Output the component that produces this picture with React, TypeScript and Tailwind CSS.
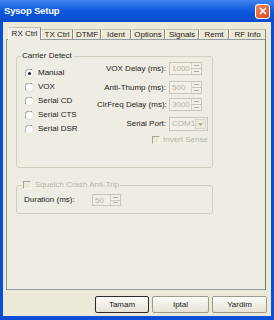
import React from 'react';

const tabs = [
  { label: 'RX Ctrl', w: 'w-[33px]' },
  { label: 'TX Ctrl', w: 'w-[32px]' },
  { label: 'DTMF', w: 'w-[28px]' },
  { label: 'Ident', w: 'w-[30px]' },
  { label: 'Options', w: 'w-[34px]' },
  { label: 'Signals', w: 'w-[34px]' },
  { label: 'Remt', w: 'w-[30px]' },
  { label: 'RF Info', w: 'w-[37px]' },
];

const radios = ['Manual', 'VOX', 'Serial CD', 'Serial CTS', 'Serial DSR'];

function Radio({ checked }: { checked?: boolean }) {
  return (
    <svg width="9" height="9" viewBox="0 0 9 9" className="shrink-0">
      <circle cx="4.5" cy="4.5" r="4" fill="#ffffff" />
      <path d="M1.2 7.3 A4 4 0 0 1 7.3 1.2" fill="none" stroke="#8a877c" strokeWidth="1" />
      <path d="M7.3 1.2 A4 4 0 0 1 1.2 7.3" fill="none" stroke="#dcdad0" strokeWidth="1" />
      {checked && <circle cx="4.5" cy="4.5" r="1.6" fill="#222" />}
    </svg>
  );
}

function Checkbox() {
  return (
    <div className="w-[8px] h-[8px] shrink-0 border-t border-l border-[#a8a59a] border-b border-r border-b-[#f4f3ee] border-r-[#f4f3ee] bg-[#ece9d8]" />
  );
}

function Spin({ value, w = 'w-[33px]', h = 'h-[13px]' }: { value: string; w?: string; h?: string }) {
  return (
    <div className={`${w} ${h} flex border border-[#c9c7ba] bg-[#f1efe6]`}>
      <div className="flex-1 pl-[2px] leading-[11px] text-[#b8b5a6]">{value}</div>
      <div className="w-[10px] flex flex-col border-l border-[#d6d3c6]">
        <div className="flex-1 flex items-center justify-center border-b border-[#c9c7ba]">
          <div className="w-[5px] h-px bg-[#b0ad9f]" />
        </div>
        <div className="flex-1 flex items-center justify-center">
          <div className="w-[5px] h-px bg-[#b0ad9f]" />
        </div>
      </div>
    </div>
  );
}

function Combo() {
  return (
    <div className="w-[39px] h-[14px] flex border border-[#c9c7ba] bg-[#f1efe6]">
      <div className="flex-1 pl-[2px] leading-[12px] text-[#b8b5a6]">COM1</div>
      <div className="w-[11px] my-px mr-px flex items-center justify-center border border-[#d6d3c6] bg-[#ece9d8]">
        <svg width="5" height="3" viewBox="0 0 5 3">
          <path d="M0 0 L5 0 L2.5 3 Z" fill="#aeab9d" />
        </svg>
      </div>
    </div>
  );
}

function FieldRow({ label, children, className = '' }: { label: string; children: React.ReactNode; className?: string }) {
  return (
    <div className={`flex items-center ${className}`}>
      <div className="w-[72px] pr-[3px] text-right whitespace-nowrap">{label}</div>
      {children}
    </div>
  );
}

function Button({ label, primary, w }: { label: string; primary?: boolean; w: string }) {
  return (
    <div
      className={`${w} h-[17px] flex items-center justify-center rounded-[2px] bg-gradient-to-b from-[#fbfbf8] to-[#e6e3d6] border ${
        primary ? 'border-[#2b2b2b]' : 'border-[#9d9a8e]'
      }`}
    >
      {label}
    </div>
  );
}

export default function App() {
  return (
    <div
      className="w-[274px] h-[320px] flex flex-col overflow-hidden bg-[#0c4fd7] text-[8px] text-[#1a1a1a]"
      style={{ fontFamily: '"Liberation Sans", Arial, sans-serif' }}
    >
      {/* title bar */}
      <div className="h-[22px] shrink-0 flex items-center pl-[4px] pr-[4px] bg-gradient-to-b from-[#3f85f0] via-[#0c58dc] to-[#0a4ccc]">
        <span className="text-white font-bold text-[9.5px] tracking-[-0.2px] flex-1">Sysop Setup</span>
        <div className="w-[15px] h-[15px] rounded-[3px] border border-white bg-gradient-to-br from-[#f08a5c] to-[#d9471f] flex items-center justify-center">
          <svg width="8" height="8" viewBox="0 0 8 8">
            <path d="M1 1 L7 7 M7 1 L1 7" stroke="#ffffff" strokeWidth="1.6" />
          </svg>
        </div>
      </div>

      {/* dialog body */}
      <div className="flex-1 mx-[3px] mb-[4px] bg-[#ece9d8] flex flex-col">
        <div className="pl-[5px] pt-[5px] h-[18px] flex items-end">
          {tabs.map((t, i) => (
            <div
              key={t.label}
              className={`${t.w} flex items-center justify-center whitespace-nowrap border-l border-r border-t border-l-[#ffffff] border-r-[#8e8b80] border-t-[#c4c1b4] ${
                i === 0 ? 'h-[13px] bg-[#efede3] relative z-10' : 'h-[11px] bg-[#ece9d8]'
              }`}
            >
              {t.label}
            </div>
          ))}
        </div>

        {/* tab panel */}
        <div className="ml-[3px] -mt-px w-[260px] h-[251px] border border-[#919b9c] border-r-[#6f7470] bg-[#efede3] flex flex-col">
          <fieldset className="ml-[9px] mt-[11px] w-[197px] h-[117px] border border-[#d0d0bf] rounded-[3px]">
            <legend className="ml-[4px] px-[1px] leading-[10px]">Carrier Detect</legend>
            <div className="flex">
              <div className="w-[80px] pl-[8px] pt-[5px] flex flex-col">
                {radios.map((r, i) => (
                  <div key={r} className="h-[14px] flex items-center gap-[4px]">
                    <Radio checked={i === 0} />
                    <span>{r}</span>
                  </div>
                ))}
              </div>
              <div className="flex flex-col pt-px">
                <FieldRow label="VOX Delay (ms):">
                  <Spin value="1000" />
                </FieldRow>
                <FieldRow label="Anti-Thump (ms):" className="mt-[6px]">
                  <Spin value="500" />
                </FieldRow>
                <FieldRow label="ClrFreq Delay (ms):" className="mt-[4px]">
                  <Spin value="3000" />
                </FieldRow>
                <FieldRow label="Serial Port:" className="mt-[6px]">
                  <Combo />
                </FieldRow>
                <div className="mt-[3px] ml-[55px] flex items-center gap-[3px] text-[#b8b5a6]">
                  <Checkbox />
                  <span>Invert Sense</span>
                </div>
              </div>
            </div>
          </fieldset>

          <fieldset className="ml-[9px] mt-[12px] w-[197px] h-[34px] border border-[#d0d0bf] rounded-[3px]">
            <legend className="ml-[5px] px-[1px] leading-[10px]">
              <span className="flex items-center gap-[4px] text-[#b8b5a6]">
                <Checkbox />
                Squelch Crash Anti-Trip
              </span>
            </legend>
            <div className="flex items-center pl-[7px] mt-[4px]">
              <div className="w-[68px]">Duration (ms):</div>
              <Spin value="50" w="w-[29px]" h="h-[12px]" />
            </div>
          </fieldset>
        </div>

        {/* buttons */}
        <div className="mt-[6px] flex justify-end gap-[3px] pr-[4px]">
          <Button label="Tamam" primary w="w-[54px]" />
          <Button label="Iptal" w="w-[57px]" />
          <Button label="Yardim" w="w-[55px]" />
        </div>
      </div>
    </div>
  );
}
